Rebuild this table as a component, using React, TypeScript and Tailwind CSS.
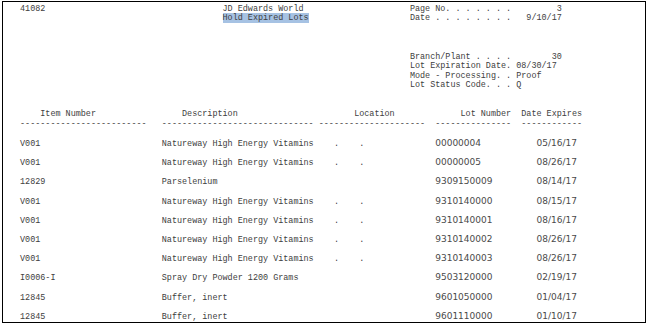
import React from "react";

const rows: [string, string, boolean, string, string][] = [
  ["V001", "Natureway High Energy Vitamins", true, "00000004", "05/16/17"],
  ["V001", "Natureway High Energy Vitamins", true, "00000005", "08/26/17"],
  ["12829", "Parselenium", false, "9309150009", "08/14/17"],
  ["V001", "Natureway High Energy Vitamins", true, "9310140000", "08/15/17"],
  ["V001", "Natureway High Energy Vitamins", true, "9310140001", "08/16/17"],
  ["V001", "Natureway High Energy Vitamins", true, "9310140002", "08/26/17"],
  ["V001", "Natureway High Energy Vitamins", true, "9310140003", "08/26/17"],
  ["I0006-I", "Spray Dry Powder 1200 Grams", false, "9503120000", "02/19/17"],
  ["12845", "Buffer, inert", false, "9601050000", "01/04/17"],
  ["12845", "Buffer, inert", false, "9601110000", "01/10/17"],
];

const pad = (s: string, n: number) => s.padEnd(n, " ");
const sp = (n: number) => " ".repeat(n);

function L({ children }: { children?: React.ReactNode }) {
  return <div className="h-[9.6px] leading-[9.6px] whitespace-pre">{children}</div>;
}

export default function App() {
  const dashes =
    "-".repeat(25) + sp(3) + "-".repeat(30) + sp(1) + "-".repeat(21) + sp(2) + "-".repeat(15) + sp(2) + "-".repeat(12);
  return (
    <div className="w-[649px] h-[327px] bg-white overflow-hidden">
      <div className="ml-[2px] mt-[1px] w-[644px] h-[322px] border border-black pl-[17px] pt-[2.7px] font-['Liberation_Mono','Courier_New',monospace] text-[8.45px] text-[#404040]">
        <L>{pad("41082", 40) + pad("JD Edwards World", 37) + "Page No. . . . . . ." + "         3"}</L>
        <L>
          {sp(40)}
          <span className="bg-[#a6c2e3]">Hold Expired Lots</span>
          {sp(20) + "Date . . . . . . . ." + "   9/10/17"}
        </L>
        <L />
        <L />
        <L />
        <L>{sp(77) + "Branch/Plant . . . ." + "        30"}</L>
        <L>{sp(77) + "Lot Expiration Date." + " 08/30/17"}</L>
        <L>{sp(77) + "Mode - Processing. ." + " Proof"}</L>
        <L>{sp(77) + "Lot Status Code. . ." + " Q"}</L>
        <L />
        <L />
        <L>{pad("    Item Number", 32) + pad("Description", 34) + pad("Location", 21) + "Lot Number" + sp(2) + "Date Expires"}</L>
        <L>{dashes}</L>
        {rows.map(([item, desc, dots, lot, date], i) => (
          <div key={i} className="pt-[9.6px]">
            <L>
              {pad(item, 28) + pad(desc, 34) + (dots ? pad(".    .", 20) : sp(20))}
              <span className="inline-block w-[20ch]">
                <span className="font-['DejaVu_Sans',sans-serif] text-[9px] text-[#4a4a4a]">{lot}</span>
              </span>
              <span className="font-['DejaVu_Sans',sans-serif] text-[9px] text-[#4a4a4a]">{date}</span>
            </L>
          </div>
        ))}
      </div>
    </div>
  );
}
